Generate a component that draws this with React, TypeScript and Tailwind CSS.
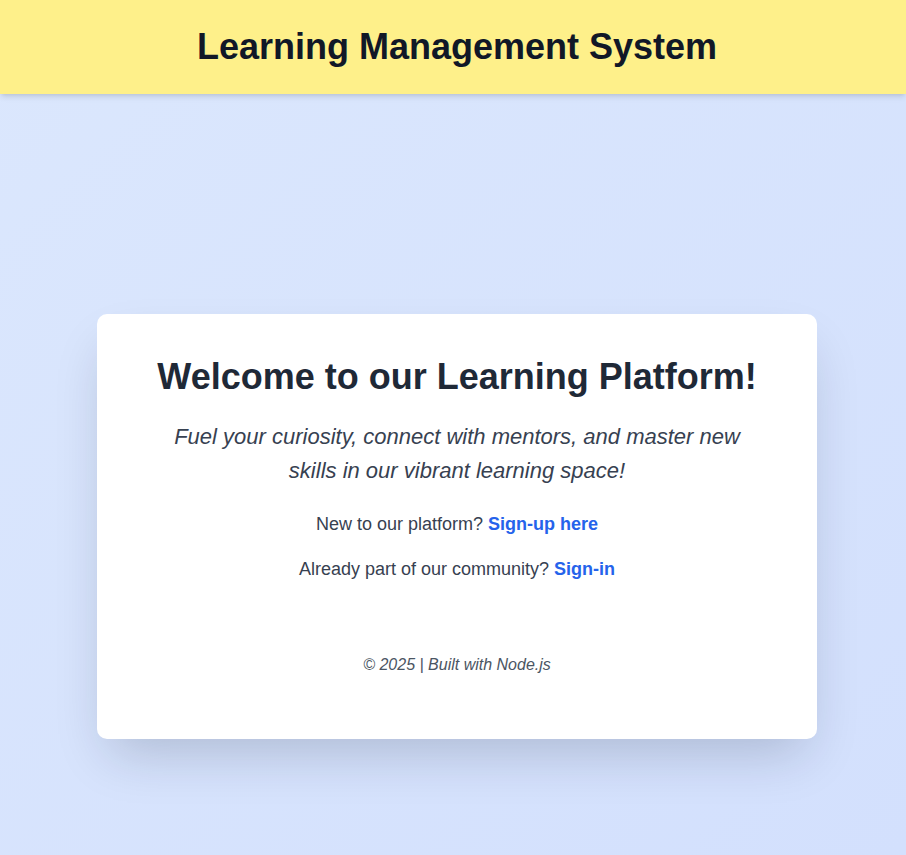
export default function App() {
  return (
    <div className="min-h-screen bg-gradient-to-br from-[#dbe7fd] to-[#d3e0fd] font-['Trebuchet_MS','Liberation_Sans',sans-serif]">
      <header className="flex h-[94px] items-center justify-center bg-[#fef08a] pl-2 shadow-md">
        <h1 className="text-[36px] font-bold text-[#111827]">Learning Management System</h1>
      </header>
      <main className="flex justify-center pt-[220px] pb-[116px] pl-2">
        <div className="w-[720px] rounded-[10px] bg-white px-10 pt-[43px] pb-[62px] text-center shadow-2xl shadow-slate-900/20">
          <h2 className="text-[36px] leading-[40px] font-bold text-[#1f2937]">Welcome to our Learning Platform!</h2>
          <p className="mx-auto mt-[23px] max-w-[600px] text-[22px] leading-[34px] text-[#374151] italic">
            Fuel your curiosity, connect with mentors, and master new skills in our vibrant learning space!
          </p>
          <p className="mt-[22px] text-[18px] leading-[28px] text-[#374151]">
            New to our platform?{' '}
            <a href="#" className="font-bold text-[#2563eb]">Sign-up here</a>
          </p>
          <p className="mt-[17px] text-[18px] leading-[28px] text-[#374151]">
            Already part of our community?{' '}
            <a href="#" className="font-bold text-[#2563eb]">Sign-in</a>
          </p>
          <footer className="mt-[70px] text-[16px] leading-[24px] text-[#4b5563] italic">© 2025 | Built with Node.js</footer>
        </div>
      </main>
    </div>
  )
}
